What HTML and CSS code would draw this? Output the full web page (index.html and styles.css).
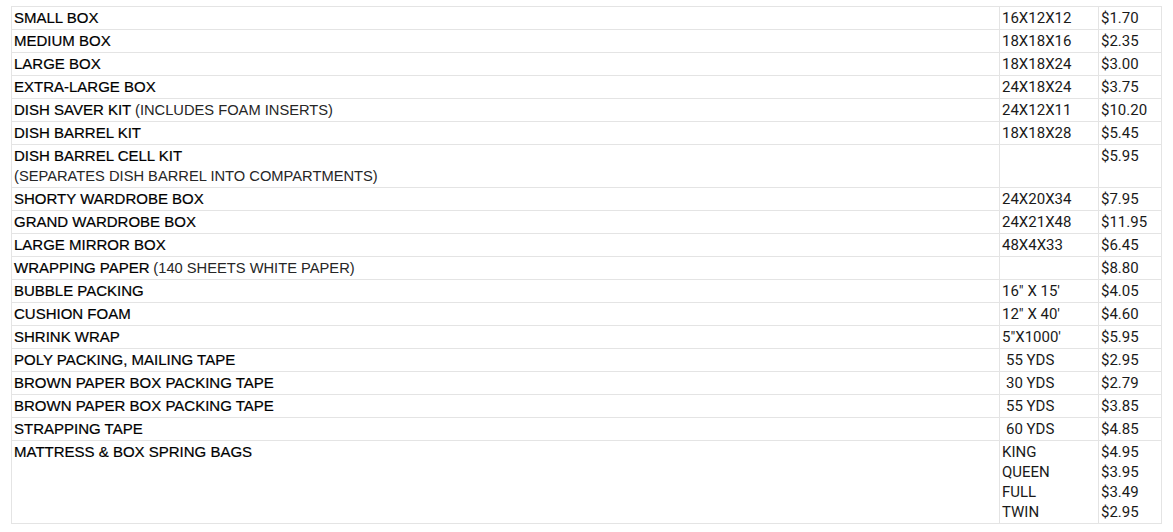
FILE: index.html
```html
<!DOCTYPE html>
<html>
<head>
<meta charset="utf-8">
<link rel="stylesheet" href="styles.css">
</head>
<body>
<table class="price-table">
  <colgroup>
    <col class="col-name">
    <col class="col-size">
    <col class="col-price">
  </colgroup>
  <tbody>
    <tr><td class="name"><span class="item">SMALL BOX</span></td><td>16X12X12</td><td>$1.70</td></tr>
    <tr><td class="name"><span class="item">MEDIUM BOX</span></td><td>18X18X16</td><td>$2.35</td></tr>
    <tr><td class="name"><span class="item">LARGE BOX</span></td><td>18X18X24</td><td>$3.00</td></tr>
    <tr><td class="name"><span class="item">EXTRA-LARGE BOX</span></td><td>24X18X24</td><td>$3.75</td></tr>
    <tr><td class="name"><span class="item">DISH SAVER KIT</span> <span class="note">(INCLUDES FOAM INSERTS)</span></td><td>24X12X11</td><td>$10.20</td></tr>
    <tr><td class="name"><span class="item">DISH BARREL KIT</span></td><td>18X18X28</td><td>$5.45</td></tr>
    <tr><td class="name"><span class="item">DISH BARREL CELL KIT</span><br><span class="note">(SEPARATES DISH BARREL INTO COMPARTMENTS)</span></td><td></td><td>$5.95</td></tr>
    <tr><td class="name"><span class="item">SHORTY WARDROBE BOX</span></td><td>24X20X34</td><td>$7.95</td></tr>
    <tr><td class="name"><span class="item">GRAND WARDROBE BOX</span></td><td>24X21X48</td><td>$11.95</td></tr>
    <tr><td class="name"><span class="item">LARGE MIRROR BOX</span></td><td>48X4X33</td><td>$6.45</td></tr>
    <tr><td class="name"><span class="item">WRAPPING PAPER</span> <span class="note">(140 SHEETS WHITE PAPER)</span></td><td></td><td>$8.80</td></tr>
    <tr><td class="name"><span class="item">BUBBLE PACKING</span></td><td>16" X 15'</td><td>$4.05</td></tr>
    <tr><td class="name"><span class="item">CUSHION FOAM</span></td><td>12" X 40'</td><td>$4.60</td></tr>
    <tr><td class="name"><span class="item">SHRINK WRAP</span></td><td>5"X1000'</td><td>$5.95</td></tr>
    <tr><td class="name"><span class="item">POLY PACKING, MAILING TAPE</span></td><td><span class="indent">55 YDS</span></td><td>$2.95</td></tr>
    <tr><td class="name"><span class="item">BROWN PAPER BOX PACKING TAPE</span></td><td><span class="indent">30 YDS</span></td><td>$2.79</td></tr>
    <tr><td class="name"><span class="item">BROWN PAPER BOX PACKING TAPE</span></td><td><span class="indent">55 YDS</span></td><td>$3.85</td></tr>
    <tr><td class="name"><span class="item">STRAPPING TAPE</span></td><td><span class="indent">60 YDS</span></td><td>$4.85</td></tr>
    <tr><td class="name"><span class="item">MATTRESS &amp; BOX SPRING BAGS</span></td><td>KING<br>QUEEN<br>FULL<br>TWIN</td><td>$4.95<br>$3.95<br>$3.49<br>$2.95</td></tr>
  </tbody>
</table>
</body>
</html>
```

FILE: styles.css
```css
html, body {
  margin: 0;
  padding: 0;
  background: #ffffff;
}

body {
  padding: 6px 0 0 11px;
  font-family: Roboto, "Liberation Sans", Arial, sans-serif;
  font-size: 15px;
  line-height: 20px;
  color: #1a1a1a;
}

.price-table {
  border-collapse: collapse;
  table-layout: fixed;
  width: 1150px;
}

.col-name { width: 988px; }
.col-size { width: 99px; }
.col-price { width: 63px; }

.price-table td {
  border: 1px solid #e4e4e4;
  padding: 1px 2px;
  vertical-align: top;
  text-align: left;
  white-space: nowrap;
}

.item {
  font-family: "Liberation Sans", Arial, sans-serif;
  color: #000000;
  -webkit-text-stroke: 0.2px #000000;
}

.note {
  font-family: "Liberation Sans", Arial, sans-serif;
  font-size: 14.7px;
  color: #262626;
}

.indent {
  padding-left: 4px;
}
```
